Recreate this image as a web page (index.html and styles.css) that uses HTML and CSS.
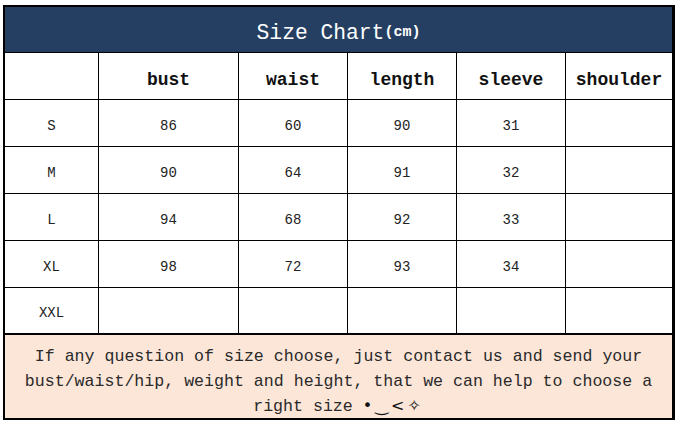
FILE: index.html
```
<!DOCTYPE html>
<html>
<head>
<meta charset="utf-8">
<link rel="stylesheet" href="styles.css">
</head>
<body>
<div class="chart">
  <div class="title">Size Chart<span class="unit">(cm)</span></div>
  <div class="grid">
    <div class="cell head"></div>
    <div class="cell head">bust</div>
    <div class="cell head">waist</div>
    <div class="cell head">length</div>
    <div class="cell head">sleeve</div>
    <div class="cell head last">shoulder</div>

    <div class="cell">S</div><div class="cell">86</div><div class="cell">60</div><div class="cell">90</div><div class="cell">31</div><div class="cell last"></div>
    <div class="cell">M</div><div class="cell">90</div><div class="cell">64</div><div class="cell">91</div><div class="cell">32</div><div class="cell last"></div>
    <div class="cell">L</div><div class="cell">94</div><div class="cell">68</div><div class="cell">92</div><div class="cell">33</div><div class="cell last"></div>
    <div class="cell">XL</div><div class="cell">98</div><div class="cell">72</div><div class="cell">93</div><div class="cell">34</div><div class="cell last"></div>
    <div class="cell">XXL</div><div class="cell"></div><div class="cell"></div><div class="cell"></div><div class="cell"></div><div class="cell last"></div>
  </div>
  <div class="note">If any question of size choose, just contact us and send your bust/waist/hip, weight and height, that we can help to choose a right size <span class="emo">•‿&lt;✧</span></div>
</div>
</body>
</html>
```
FILE: styles.css
```
html, body {
  margin: 0;
  padding: 0;
  background: #ffffff;
}
body {
  padding: 5px 0 0 3px;
  font-family: "Liberation Mono", "DejaVu Sans Mono", monospace;
}
.chart {
  width: 672px;
  box-sizing: border-box;
  border: 2px solid #000;
  border-right-width: 3px;
}
.title {
  height: 46px;
  background: #253f62;
  color: #fff;
  font-size: 21.3px;
  display: flex;
  align-items: center;
  justify-content: center;
  border-bottom: 1px solid #000;
  padding-top: 6px;
  box-sizing: border-box;
}
.title .unit {
  font-size: 15px;
  font-weight: bold;
}
.grid {
  display: grid;
  grid-template-columns: 94px 140px 109px 109px 109px 106px;
  grid-auto-rows: 47px;
}
.cell {
  box-sizing: border-box;
  border-right: 1px solid #000;
  border-bottom: 1px solid #000;
  display: flex;
  align-items: center;
  justify-content: center;
  font-size: 14px;
  color: #222;
  padding-top: 5px;
}
.cell.last {
  border-right: none;
}
.cell.head {
  font-size: 18px;
  font-weight: bold;
  color: #111;
  padding-top: 8px;
}
.grid .cell:nth-last-child(-n+6) {
  border-bottom-width: 2px;
}
.note {
  background: #fce6d8;
  color: #2a2a2a;
  font-size: 16.6px;
  line-height: 25px;
  text-align: center;
  padding: 9px 16px 0 16px;
  height: 83px;
  box-sizing: border-box;
}
.emo {
  font-family: "DejaVu Sans", sans-serif;
  font-size: 16px;
  line-height: 1;
  letter-spacing: 3px;
  color: #111;
}
```
